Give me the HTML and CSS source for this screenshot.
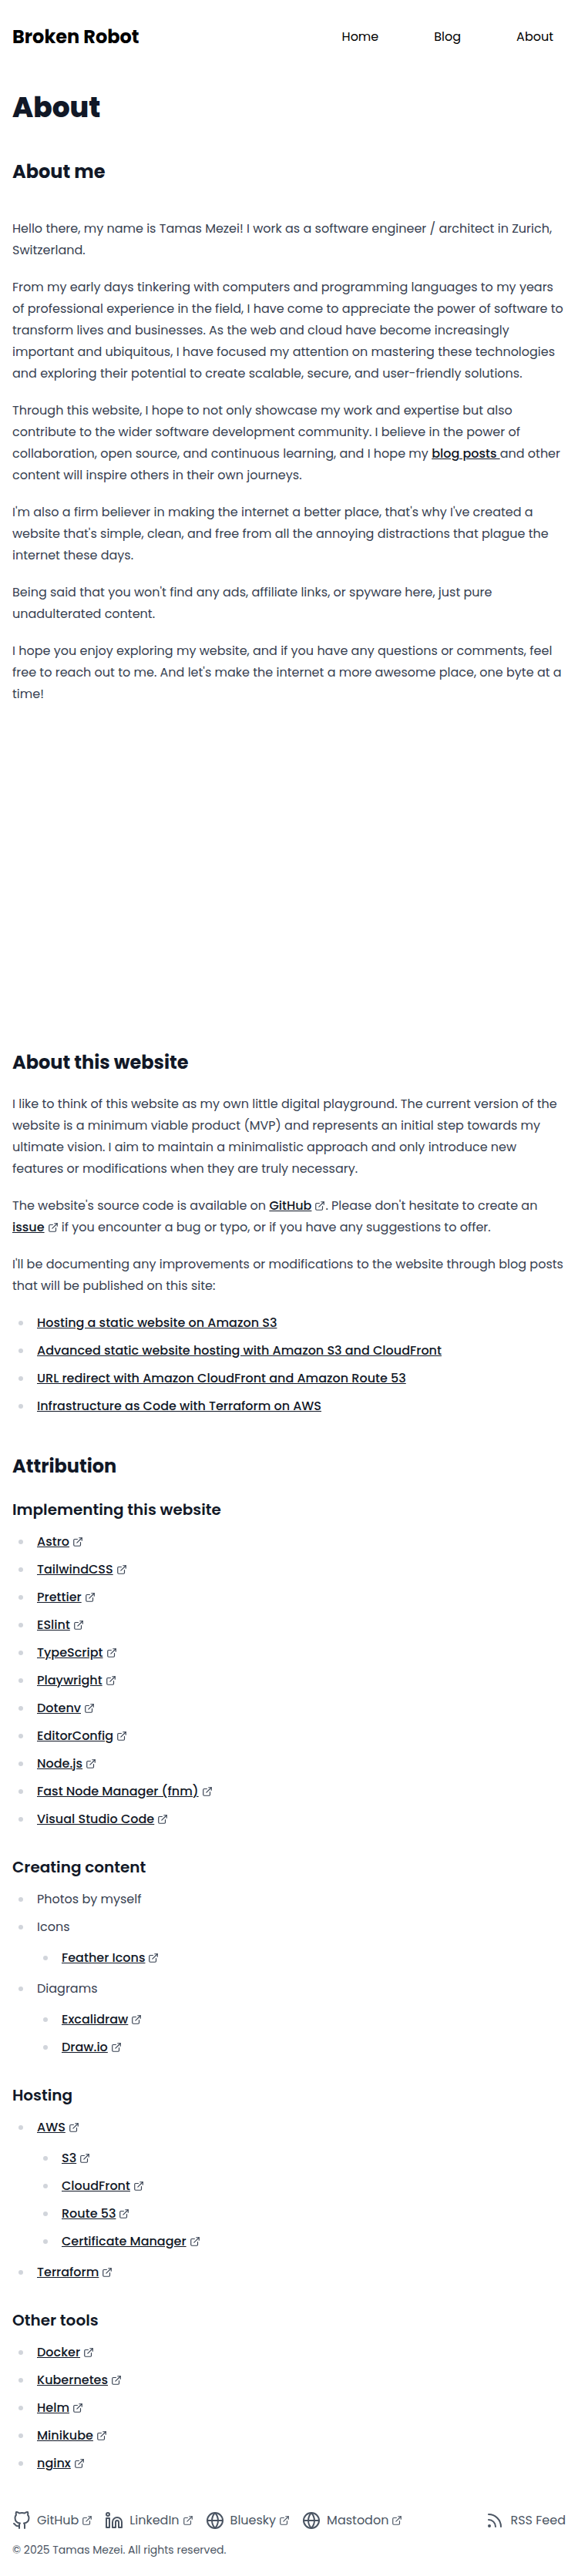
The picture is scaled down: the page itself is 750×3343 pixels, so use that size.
FILE: index.html
```html
<!DOCTYPE html>
<html lang="en">
<head>
<meta charset="utf-8">
<title>About | Broken Robot</title>
<link rel="stylesheet" href="styles.css">
</head>
<body>
<svg class="sprite" aria-hidden="true">
  <symbol id="ext" viewBox="0 0 24 24"><path d="M18 13v6a2 2 0 0 1-2 2H5a2 2 0 0 1-2-2V8a2 2 0 0 1 2-2h6"/><polyline points="15 3 21 3 21 9"/><line x1="10" y1="14" x2="21" y2="3"/></symbol>
  <symbol id="github" viewBox="0 0 24 24"><path d="M9 19c-5 1.5-5-2.5-7-3m14 6v-3.87a3.37 3.37 0 0 0-.94-2.61c3.14-.35 6.44-1.54 6.44-7A5.44 5.44 0 0 0 20 4.77 5.07 5.07 0 0 0 19.91 1S18.73.65 16 2.48a13.38 13.38 0 0 0-7 0C6.27.65 5.09 1 5.09 1A5.07 5.07 0 0 0 5 4.77a5.44 5.44 0 0 0-1.5 3.78c0 5.42 3.3 6.61 6.44 7A3.37 3.37 0 0 0 9 18.13V22"/></symbol>
  <symbol id="linkedin" viewBox="0 0 24 24"><path d="M16 8a6 6 0 0 1 6 6v7h-4v-7a2 2 0 0 0-2-2 2 2 0 0 0-2 2v7h-4v-7a6 6 0 0 1 6-6z"/><rect x="2" y="9" width="4" height="12"/><circle cx="4" cy="4" r="2"/></symbol>
  <symbol id="globe" viewBox="0 0 24 24"><circle cx="12" cy="12" r="10"/><line x1="2" y1="12" x2="22" y2="12"/><path d="M12 2a15.3 15.3 0 0 1 4 10 15.3 15.3 0 0 1-4 10 15.3 15.3 0 0 1-4-10 15.3 15.3 0 0 1 4-10z"/></symbol>
  <symbol id="rss" viewBox="0 0 24 24"><path d="M4 11a9 9 0 0 1 9 9"/><path d="M4 4a16 16 0 0 1 16 16"/><circle cx="5" cy="19" r="1"/></symbol>
</svg>

<header class="header">
  <a class="brand" href="#">Broken Robot</a>
  <nav class="nav"><a href="#">Home</a><a href="#">Blog</a><a href="#">About</a></nav>
</header>

<main class="prose">
  <h1>About</h1>

  <h2>About me</h2>
  <section class="intro">
    <p>Hello there, my name is Tamas Mezei! I work as a software engineer / architect in Zurich, Switzerland.</p>
    <p>From my early days tinkering with computers and programming languages to my years of professional experience in the field, I have come to appreciate the power of software to transform lives and businesses. As the web and cloud have become increasingly important and ubiquitous, I have focused my attention on mastering these technologies and exploring their potential to create scalable, secure, and user-friendly solutions.</p>
    <p>Through this website, I hope to not only showcase my work and expertise but also contribute to the wider software development community. I believe in the power of collaboration, open source, and continuous learning, and I hope my <a href="#">blog posts </a>and other content will inspire others in their own journeys.</p>
    <p>I'm also a firm believer in making the internet a better place, that's why I've created a website that's simple, clean, and free from all the annoying distractions that plague the internet these days.</p>
    <p>Being said that you won't find any ads, affiliate links, or spyware here, just pure unadulterated content.</p>
    <p>I hope you enjoy exploring my website, and if you have any questions or comments, feel free to reach out to me. And let's make the internet a more awesome place, one byte at a time!</p>
  </section>

  <h2>About this website</h2>
  <p>I like to think of this website as my own little digital playground. The current version of the website is a minimum viable product (MVP) and represents an initial step towards my ultimate vision. I aim to maintain a minimalistic approach and only introduce new features or modifications when they are truly necessary.</p>
  <p>The website's source code is available on <a href="#">GitHub</a><svg class="ext"><use href="#ext"/></svg>. Please don't hesitate to create an <a href="#">issue</a><svg class="ext"><use href="#ext"/></svg> if you encounter a bug or typo, or if you have any suggestions to offer.</p>
  <p>I'll be documenting any improvements or modifications to the website through blog posts that will be published on this site:</p>
  <ul>
    <li><a href="#">Hosting a static website on Amazon S3</a></li>
    <li><a href="#">Advanced static website hosting with Amazon S3 and CloudFront</a></li>
    <li><a href="#">URL redirect with Amazon CloudFront and Amazon Route 53</a></li>
    <li><a href="#">Infrastructure as Code with Terraform on AWS</a></li>
  </ul>

  <h2>Attribution</h2>
  <h3>Implementing this website</h3>
  <ul>
    <li><a href="#">Astro</a><svg class="ext"><use href="#ext"/></svg></li>
    <li><a href="#">TailwindCSS</a><svg class="ext"><use href="#ext"/></svg></li>
    <li><a href="#">Prettier</a><svg class="ext"><use href="#ext"/></svg></li>
    <li><a href="#">ESlint</a><svg class="ext"><use href="#ext"/></svg></li>
    <li><a href="#">TypeScript</a><svg class="ext"><use href="#ext"/></svg></li>
    <li><a href="#">Playwright</a><svg class="ext"><use href="#ext"/></svg></li>
    <li><a href="#">Dotenv</a><svg class="ext"><use href="#ext"/></svg></li>
    <li><a href="#">EditorConfig</a><svg class="ext"><use href="#ext"/></svg></li>
    <li><a href="#">Node.js</a><svg class="ext"><use href="#ext"/></svg></li>
    <li><a href="#">Fast Node Manager (fnm)</a><svg class="ext"><use href="#ext"/></svg></li>
    <li><a href="#">Visual Studio Code</a><svg class="ext"><use href="#ext"/></svg></li>
  </ul>

  <h3>Creating content</h3>
  <ul>
    <li>Photos by myself</li>
    <li>Icons
      <ul>
        <li><a href="#">Feather Icons</a><svg class="ext"><use href="#ext"/></svg></li>
      </ul>
    </li>
    <li>Diagrams
      <ul>
        <li><a href="#">Excalidraw</a><svg class="ext"><use href="#ext"/></svg></li>
        <li><a href="#">Draw.io</a><svg class="ext"><use href="#ext"/></svg></li>
      </ul>
    </li>
  </ul>

  <h3>Hosting</h3>
  <ul>
    <li><a href="#">AWS</a><svg class="ext"><use href="#ext"/></svg>
      <ul>
        <li><a href="#">S3</a><svg class="ext"><use href="#ext"/></svg></li>
        <li><a href="#">CloudFront</a><svg class="ext"><use href="#ext"/></svg></li>
        <li><a href="#">Route 53</a><svg class="ext"><use href="#ext"/></svg></li>
        <li><a href="#">Certificate Manager</a><svg class="ext"><use href="#ext"/></svg></li>
      </ul>
    </li>
    <li><a href="#">Terraform</a><svg class="ext"><use href="#ext"/></svg></li>
  </ul>

  <h3>Other tools</h3>
  <ul>
    <li><a href="#">Docker</a><svg class="ext"><use href="#ext"/></svg></li>
    <li><a href="#">Kubernetes</a><svg class="ext"><use href="#ext"/></svg></li>
    <li><a href="#">Helm</a><svg class="ext"><use href="#ext"/></svg></li>
    <li><a href="#">Minikube</a><svg class="ext"><use href="#ext"/></svg></li>
    <li><a href="#">nginx</a><svg class="ext"><use href="#ext"/></svg></li>
  </ul>
</main>

<footer class="footer">
  <div class="social">
    <a href="#"><svg class="icon"><use href="#github"/></svg><span>GitHub<svg class="ext"><use href="#ext"/></svg></span></a>
    <a href="#"><svg class="icon"><use href="#linkedin"/></svg><span>LinkedIn<svg class="ext"><use href="#ext"/></svg></span></a>
    <a href="#"><svg class="icon"><use href="#globe"/></svg><span>Bluesky<svg class="ext"><use href="#ext"/></svg></span></a>
    <a href="#"><svg class="icon"><use href="#globe"/></svg><span>Mastodon<svg class="ext"><use href="#ext"/></svg></span></a>
    <a class="feed" href="#"><svg class="icon"><use href="#rss"/></svg><span>RSS Feed</span></a>
  </div>
  <p class="copyright">© 2025 Tamas Mezei. All rights reserved.</p>
</footer>
</body>
</html>
```
FILE: styles.css
```css
* {
  box-sizing: border-box;
  margin: 0;
  padding: 0;
}

body {
  padding: 0 16px;
  background: #fff;
  color: #000;
  font-family: Poppins, Inter, "Noto Sans", sans-serif;
  font-size: 16px;
  font-weight: 400;
  line-height: 24px;
}

a {
  color: inherit;
  text-decoration: none;
}

.sprite {
  display: none;
}

.header {
  display: flex;
  align-items: center;
  justify-content: space-between;
  height: 96px;
}

.brand {
  font-size: 24px;
  font-weight: 700;
  line-height: 32px;
}

.nav {
  display: flex;
  gap: 72px;
  padding-right: 16px;
}

.prose {
  padding-top: 24px;
  color: #374151;
  line-height: 28px;
}

.prose h1,
.prose h2,
.prose h3 {
  color: #111827;
}

.prose h1 {
  font-size: 36px;
  font-weight: 800;
  line-height: 40px;
}

.prose h2 {
  margin: 48px 0 24px;
  font-size: 24px;
  font-weight: 700;
  line-height: 32px;
}

.prose h1 + h2 {
  margin-top: 47px;
}

.prose h3 {
  margin: 32px 0 12px;
  font-size: 20px;
  font-weight: 600;
  line-height: 32px;
}

.prose h2 + h3 {
  margin-top: 0;
}

.prose p {
  margin: 20px 0;
}

.intro {
  display: flow-root;
  padding-bottom: 380px;
}

.prose a {
  color: #111827;
  font-weight: 500;
  text-decoration: underline;
}

.prose ul {
  margin: 20px 0;
  padding-left: 32px;
  list-style: none;
}

.prose h3 + ul {
  margin-top: 0;
}

.prose h3 + ul > li:first-child {
  margin-top: 0;
}

.prose li {
  margin: 8px 0;
}

.prose li ul {
  margin: 12px 0;
}

.prose li::before {
  content: "";
  display: inline-block;
  width: 6px;
  height: 6px;
  margin: 0 18px 0 -24px;
  border-radius: 50%;
  background: #d1d5db;
  vertical-align: 2px;
}

.ext,
.icon {
  fill: none;
  stroke: currentColor;
  stroke-width: 2;
  stroke-linecap: round;
  stroke-linejoin: round;
}

.ext {
  display: inline-block;
  width: 14px;
  height: 14px;
  margin-left: 4px;
  vertical-align: -2px;
}

.icon {
  width: 24px;
  height: 24px;
}

.footer {
  padding-top: 28px;
  padding-bottom: 24px;
  color: #4b5563;
}

.social {
  display: flex;
  gap: 16px;
}

.social a {
  display: flex;
  align-items: center;
  gap: 8px;
}

.social .feed {
  margin-left: auto;
}

.copyright {
  margin-top: 16px;
  font-size: 14px;
  line-height: 20px;
}
```
